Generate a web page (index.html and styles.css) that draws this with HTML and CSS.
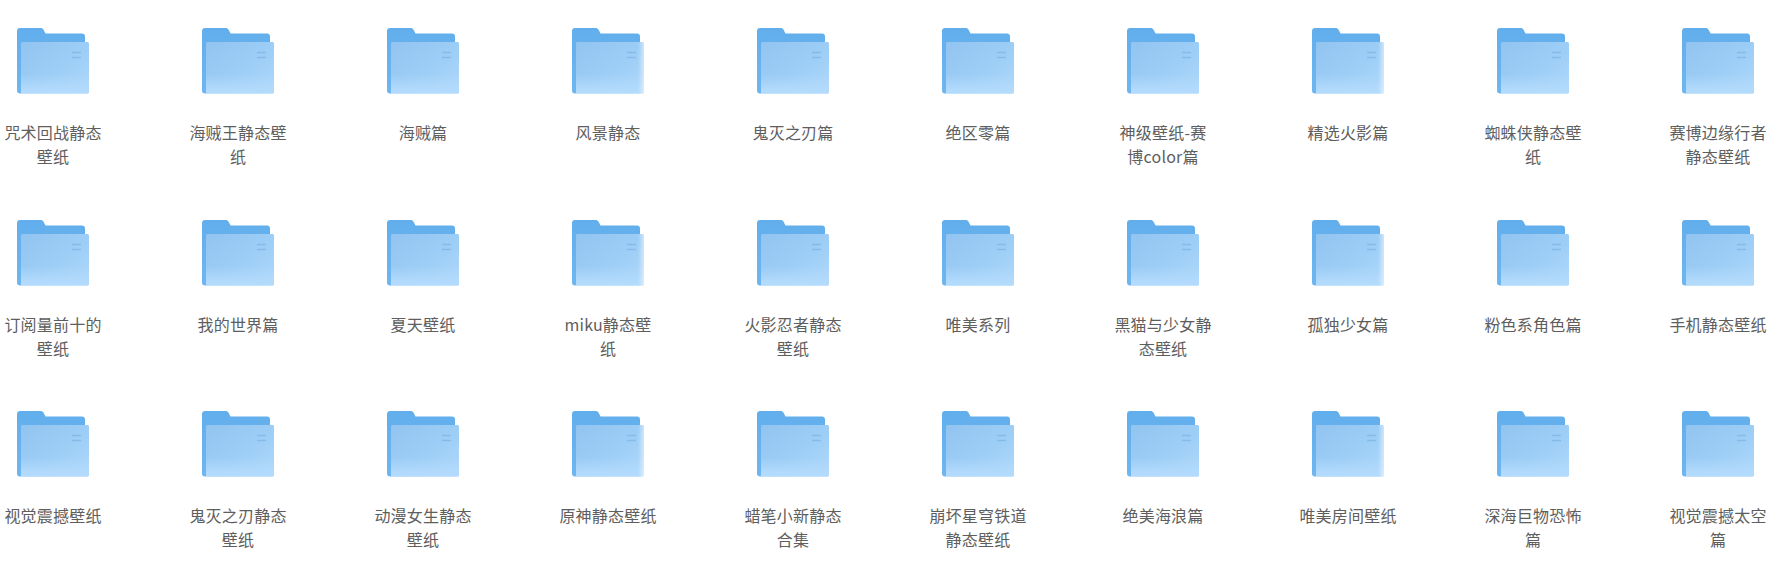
FILE: index.html
```html
<!DOCTYPE html>
<html lang="zh-CN">
<head>
    <meta charset="UTF-8">
    <meta name="viewport" content="width=device-width, initial-scale=1.0">
    <title>壁纸</title>
    <link rel="stylesheet" href="styles.css">
</head>
<body>
    <svg class="defs" width="0" height="0">
        <defs>
            <linearGradient id="back" x1="0" y1="0" x2="0" y2="1">
                <stop offset="0" stop-color="#62aeec"/>
                <stop offset="1" stop-color="#6db6f0"/>
            </linearGradient>
            <linearGradient id="front" x1="0" y1="0" x2="1" y2="1">
                <stop offset="0" stop-color="#92c4f1"/>
                <stop offset="0.55" stop-color="#9dcef6"/>
                <stop offset="1" stop-color="#b0d8fa"/>
            </linearGradient>
            <linearGradient id="shine" x1="0" y1="0" x2="0" y2="1">
                <stop offset="0" stop-color="#aed8fb" stop-opacity="0"/>
                <stop offset="0.8" stop-color="#b2dafc"/>
                <stop offset="1" stop-color="#b4dbfc"/>
            </linearGradient>
            <linearGradient id="fade" x1="0" y1="0" x2="1" y2="0">
                <stop offset="0" stop-color="#fff" stop-opacity="0"/>
                <stop offset="1" stop-color="#fff" stop-opacity="0.5"/>
            </linearGradient>
            <symbol id="folder" viewBox="0 0 72 66">
                <path d="M3 0H23.5C25 0 25.8 .6 26.6 1.8L28.5 5.5H65C66.8 5.5 68 6.7 68 8.5V20H4V65.5H3C1.2 65.5 0 64.3 0 62.5V3C0 1.2 1.2 0 3 0Z" fill="url(#back)"/>
                <path d="M4 65.5V15.5C4 14.6 4.6 14 5.5 14H70.5C71.4 14 72 14.6 72 15.5V64C72 64.9 71.4 65.5 70.5 65.5Z" fill="url(#front)"/>
                <path d="M4 65.5V46H72V64C72 64.9 71.4 65.5 70.5 65.5Z" fill="url(#shine)"/>
                <path d="M55 24.5H64M55 29.5H64" stroke="#86bbe9" stroke-width="1.3"/>
            </symbol>
            <!-- same folder, right edge washed out -->
            <symbol id="folder-soft" viewBox="0 0 72 66">
                <use href="#folder"/>
                <rect x="66" y="14" width="6" height="52" fill="url(#fade)"/>
            </symbol>
        </defs>
    </svg>
    <div class="grid">
        <div class="item"><svg class="folder"><use href="#folder"/></svg><p class="name">咒术回战静态壁纸</p></div>
        <div class="item"><svg class="folder"><use href="#folder"/></svg><p class="name">海贼王静态壁纸</p></div>
        <div class="item"><svg class="folder"><use href="#folder"/></svg><p class="name">海贼篇</p></div>
        <div class="item"><svg class="folder"><use href="#folder-soft"/></svg><p class="name">风景静态</p></div>
        <div class="item"><svg class="folder"><use href="#folder"/></svg><p class="name">鬼灭之刃篇</p></div>
        <div class="item"><svg class="folder"><use href="#folder"/></svg><p class="name">绝区零篇</p></div>
        <div class="item"><svg class="folder"><use href="#folder"/></svg><p class="name">神级壁纸-赛博color篇</p></div>
        <div class="item"><svg class="folder"><use href="#folder-soft"/></svg><p class="name">精选火影篇</p></div>
        <div class="item"><svg class="folder"><use href="#folder"/></svg><p class="name">蜘蛛侠静态壁纸</p></div>
        <div class="item"><svg class="folder"><use href="#folder"/></svg><p class="name">赛博边缘行者静态壁纸</p></div>

        <div class="item"><svg class="folder"><use href="#folder"/></svg><p class="name">订阅量前十的壁纸</p></div>
        <div class="item"><svg class="folder"><use href="#folder"/></svg><p class="name">我的世界篇</p></div>
        <div class="item"><svg class="folder"><use href="#folder"/></svg><p class="name">夏天壁纸</p></div>
        <div class="item"><svg class="folder"><use href="#folder-soft"/></svg><p class="name">miku静态壁纸</p></div>
        <div class="item"><svg class="folder"><use href="#folder"/></svg><p class="name">火影忍者静态壁纸</p></div>
        <div class="item"><svg class="folder"><use href="#folder"/></svg><p class="name">唯美系列</p></div>
        <div class="item"><svg class="folder"><use href="#folder"/></svg><p class="name">黑猫与少女静态壁纸</p></div>
        <div class="item"><svg class="folder"><use href="#folder-soft"/></svg><p class="name">孤独少女篇</p></div>
        <div class="item"><svg class="folder"><use href="#folder"/></svg><p class="name">粉色系角色篇</p></div>
        <div class="item"><svg class="folder"><use href="#folder"/></svg><p class="name">手机静态壁纸</p></div>

        <div class="item"><svg class="folder"><use href="#folder"/></svg><p class="name">视觉震撼壁纸</p></div>
        <div class="item"><svg class="folder"><use href="#folder"/></svg><p class="name">鬼灭之刃静态壁纸</p></div>
        <div class="item"><svg class="folder"><use href="#folder"/></svg><p class="name">动漫女生静态壁纸</p></div>
        <div class="item"><svg class="folder"><use href="#folder-soft"/></svg><p class="name">原神静态壁纸</p></div>
        <div class="item"><svg class="folder"><use href="#folder"/></svg><p class="name">蜡笔小新静态合集</p></div>
        <div class="item"><svg class="folder"><use href="#folder"/></svg><p class="name">崩坏星穹铁道静态壁纸</p></div>
        <div class="item"><svg class="folder"><use href="#folder"/></svg><p class="name">绝美海浪篇</p></div>
        <div class="item"><svg class="folder"><use href="#folder-soft"/></svg><p class="name">唯美房间壁纸</p></div>
        <div class="item"><svg class="folder"><use href="#folder"/></svg><p class="name">深海巨物恐怖篇</p></div>
        <div class="item"><svg class="folder"><use href="#folder"/></svg><p class="name">视觉震撼太空篇</p></div>
    </div>
</body>
</html>
```

FILE: styles.css
```css
body {
    margin: 0;
    background: #fff;
    font-family: "Noto Sans CJK SC", "Liberation Sans", sans-serif;
}

.defs {
    display: block;
    height: 0;
}

.grid {
    display: grid;
    grid-template-columns: repeat(10, 99px);
    column-gap: 86px;
    row-gap: 51.5px;
    padding: 28px 0 0 3.5px;
}

.item {
    display: flex;
    flex-direction: column;
    align-items: center;
}

.folder {
    display: block;
    width: 72px;
    height: 66px;
    filter: blur(0.4px);
}

.name {
    margin: 26px 0 0;
    font-size: 16px;
    line-height: 24px;
    letter-spacing: 0.2px;
    color: #5e5e5e;
    text-align: center;
    width: 100%;
}
```
